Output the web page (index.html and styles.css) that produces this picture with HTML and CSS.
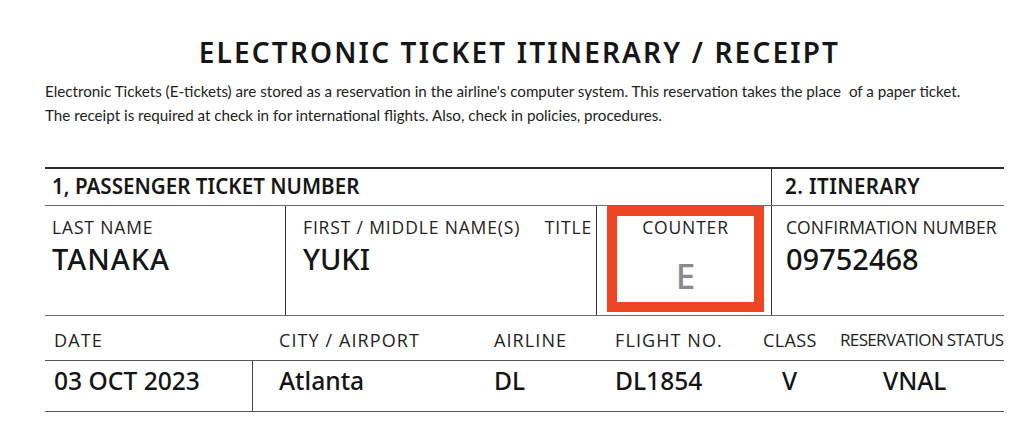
FILE: index.html
```html
<!DOCTYPE html>
<html lang="en">
<head>
<meta charset="utf-8">
<title>Electronic Ticket Itinerary / Receipt</title>
<link rel="stylesheet" href="styles.css">
</head>
<body>
<main class="page">
  <h1 class="title">ELECTRONIC TICKET ITINERARY / RECEIPT</h1>
  <p class="intro">Electronic Tickets (E-tickets) are stored as a reservation in the airline's computer system. This reservation takes the place&nbsp; of a paper ticket.<br>The receipt is required at check&nbsp;in for international flights. Also, check in policies, procedures.</p>

  <section class="ticket">
    <div class="row-head">
      <div class="head-cell head-main">1, PASSENGER TICKET NUMBER</div>
      <div class="head-cell head-side">2. ITINERARY</div>
    </div>

    <div class="row-names">
      <div class="cell cell-last">
        <div class="label">LAST NAME</div>
        <div class="value value-wide">TANAKA</div>
      </div>
      <div class="cell cell-first">
        <div class="label-pair">
          <span class="label">FIRST / MIDDLE NAME(S)</span>
          <span class="label">TITLE</span>
        </div>
        <div class="value">YUKI</div>
      </div>
      <div class="cell-counter">
        <div class="counter-box">
          <div class="label">COUNTER</div>
          <div class="counter-value">E</div>
        </div>
      </div>
      <div class="cell cell-conf">
        <div class="label label-tight">CONFIRMATION NUMBER</div>
        <div class="value">09752468</div>
      </div>
    </div>

    <div class="row-labels">
      <div class="fl c-date">DATE</div>
      <div class="fl c-city">CITY / AIRPORT</div>
      <div class="fl c-air">AIRLINE</div>
      <div class="fl c-flight">FLIGHT NO.</div>
      <div class="fl c-class">CLASS</div>
      <div class="fl c-status">RESERVATION STATUS</div>
    </div>

    <div class="row-values">
      <div class="fv c-date v-date">03 OCT 2023</div>
      <div class="fv c-city">Atlanta</div>
      <div class="fv c-air">DL</div>
      <div class="fv c-flight">DL1854</div>
      <div class="fv c-class v-class">V</div>
      <div class="fv c-status v-status">VNAL</div>
    </div>
  </section>
</main>
</body>
</html>
```

FILE: styles.css
```css
* { box-sizing: border-box; }

html, body {
  margin: 0;
  padding: 0;
  background: #ffffff;
}

body {
  font-family: "Noto Sans", "Open Sans", sans-serif;
  color: #1a1a1a;
}

.page {
  width: 1004px;
  padding: 35px 0 0 45px;
}

.title {
  margin: 0;
  padding-right: 10px;
  font-size: 28px;
  line-height: 34px;
  font-weight: 600;
  letter-spacing: 2.15px;
  text-align: center;
  color: #161616;
}

.intro {
  margin: 10px 0 0 0;
  font-family: "Lato", "Noto Sans", sans-serif;
  font-size: 15.2px;
  line-height: 24px;
  color: #222;
}

.ticket {
  margin-top: 40px;
}

/* Row 1: section headings */
.row-head {
  display: flex;
  height: 38px;
  border-top: 2px solid #2a2a2a;
}
.head-cell {
  font-size: 20.6px;
  font-weight: 600;
  line-height: 34px;
  color: #161616;
}
.head-main {
  width: 726px;
  padding-left: 7px;
}
.head-side {
  flex: 1;
  padding-left: 13px;
  border-left: 1px solid #3a3a3a;
  letter-spacing: 0.4px;
}

/* Row 2: names */
.row-names {
  display: flex;
  height: 110px;
  border-top: 1.5px solid #6a6a6a;
}
.cell {
  padding-top: 11px;
}
.cell-last {
  width: 241px;
  padding-left: 7px;
  border-right: 1px solid #333;
}
.cell-first {
  width: 311px;
  padding-left: 17px;
  padding-right: 4px;
  border-right: 1px solid #333;
}
.cell-counter {
  width: 175px;
  display: flex;
  padding: 0 7px 3px 10px;
  border-right: 1px solid #333;
}
.cell-conf {
  flex: 1;
  padding-left: 14px;
}

.label {
  font-family: "Open Sans", "Noto Sans", sans-serif;
  font-size: 17.5px;
  line-height: 20px;
  font-weight: 400;
  letter-spacing: 0.85px;
  color: #222;
}
.label-tight {
  letter-spacing: 0.1px;
}
.label-pair {
  display: flex;
  justify-content: space-between;
}
.value {
  margin-top: 6px;
  font-size: 29px;
  line-height: 32px;
  font-weight: 500;
  color: #141414;
}
.value-wide {
  letter-spacing: 1px;
}

.counter-box {
  flex: 1;
  border: 10px solid #ee4624;
  text-align: center;
  padding-top: 1px;
}
.counter-value {
  margin-top: 21px;
  font-size: 35px;
  line-height: 36px;
  font-weight: 500;
  color: #8a8a8a;
}

/* Rows 3 & 4: itinerary grid */
.row-labels,
.row-values {
  display: grid;
  grid-template-columns: 208px 241px 121px 148px 77px 1fr;
  align-items: start;
}
.row-labels {
  height: 45px;
  padding-top: 14px;
  border-top: 1.5px solid #6a6a6a;
}
.row-values {
  height: 52px;
  border-top: 1.5px solid #555;
  border-bottom: 1.5px solid #555;
}
.fl {
  font-family: "Open Sans", "Noto Sans", sans-serif;
  font-size: 18px;
  line-height: 20px;
  letter-spacing: 1.1px;
  color: #222;
  white-space: nowrap;
}
.fv {
  padding-top: 5px;
  font-size: 24.6px;
  line-height: 30px;
  font-weight: 500;
  color: #141414;
  white-space: nowrap;
}
.c-date { padding-left: 9px; }
.c-city { padding-left: 26px; }
.v-date {
  align-self: stretch;
  border-right: 1px solid #444;
}
.fl.c-class { letter-spacing: 0.4px; }
.fl.c-status {
  font-size: 17px;
  letter-spacing: -0.65px;
}
.v-class { padding-left: 19px; }
.v-status { padding-left: 43px; }
```
